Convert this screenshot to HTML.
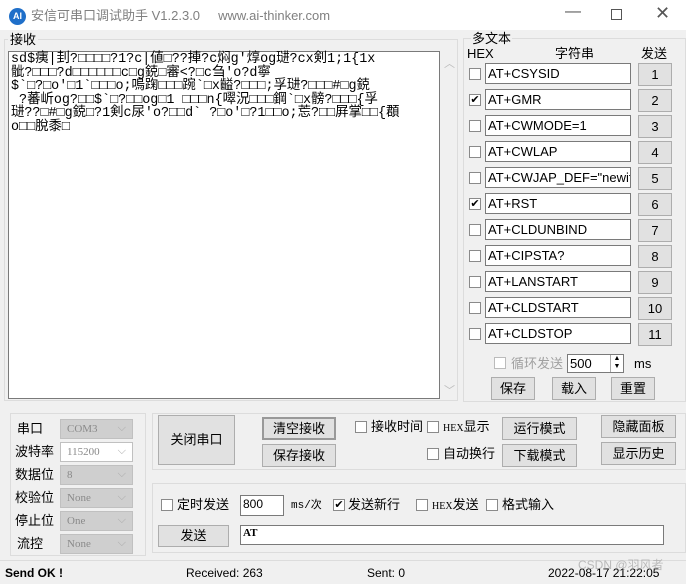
<!DOCTYPE html>
<html><head><meta charset="utf-8">
<style>
*{box-sizing:border-box;margin:0;padding:0}
body{width:686px;height:584px;overflow:hidden;background:#f0f0f0;position:relative;font-family:"Liberation Sans","Noto Sans CJK SC",sans-serif;font-size:13px;color:#000;line-height:16px}
.a{position:absolute;white-space:nowrap;line-height:16px}
.btn{position:absolute;background:#e1e1e1;border:1px solid #adadad;text-align:center;font-size:13px}
.inp{position:absolute;background:#fff;border:1px solid #7a7a7a;font-size:13px;padding-left:2px;white-space:nowrap;overflow:hidden}
.cb{position:absolute;width:12px;height:12px;border:1px solid #8a8a8a;background:#fff;font-size:11px;line-height:10px;text-align:center}
.cmb{position:absolute;left:60px;width:73px;height:20px;background:#cfcfcf;border:1px solid #c0c0c0;color:#8a8a8a;font-family:"Liberation Serif","Noto Serif CJK SC",serif;font-size:11px;line-height:18px;padding-left:6px}
.cmb:after{content:"⌵";position:absolute;right:6px;top:-1px;color:#aaa}
.grp{position:absolute;border:1px solid #dcdcdc}
.mono{font-family:"Liberation Mono","WenQuanYi Zen Hei",monospace}
</style></head><body>
<div class="a" style="left:0;top:0;width:686px;height:30px;background:#fff"></div>
<div class="a" style="left:9px;top:8px;width:17px;height:17px;border-radius:50%;background:#1f6fc9;color:#fff;font-size:9px;line-height:17px;text-align:center;font-weight:bold">AI</div>
<div class="a" style="left:31px;top:8px;color:#808080;font-size:13px">安信可串口调试助手 V1.2.3.0&nbsp;&nbsp;&nbsp;&nbsp; www.ai-thinker.com</div>
<div class="a" style="left:565px;top:4px;color:#555;font-size:16px">—</div>
<div class="a" style="left:611px;top:9px;width:11px;height:11px;border:1px solid #555"></div>
<div class="a" style="left:655px;top:5px;color:#555;font-size:18px">✕</div>

<div class="grp" style="left:4px;top:39px;width:454px;height:362px;border-color:#dcdcdc"></div>
<div class="a" style="left:8px;top:32px;background:#f0f0f0;padding:0 2px">接收</div>
<div class="a" style="left:8px;top:51px;width:432px;height:348px;background:#fff;border:1px solid #7a7a7a"></div>
<div class="a mono" style="left:11px;top:53px;font-size:13.4px;line-height:13.5px;white-space:pre">sd$痍|刲?□□□□?1?c|値□??捙?c焖g'焞og琎?cx剣1;1{1x
骴?□□□?d□□□□□□c□g鋴□審&lt;?□c刍'o?d寧
$`□?□o'□1`□□□o;嗚踘□□□踠`□x齸?□□□;孚琎?□□□#□g鋴
 ?蕃岓og?□□$`□?□□og□1 □□□n{噿況□□□鋼`□x髈?□□□{孚
琎??□#□g鋴□?1剣c尿'o?□□d` ?□o'□?1□□o;莣?□□屛掌□□{頵
o□□脫黍□</div>
<div class="a" style="left:444px;top:56px;color:#bbb;font-size:11px">︿</div>
<div class="a" style="left:444px;top:383px;color:#bbb;font-size:11px">﹀</div>

<div class="grp" style="left:463px;top:38px;width:223px;height:364px"></div>
<div class="a" style="left:471px;top:31px;background:#f0f0f0;padding:0 1px">多文本</div>
<div class="a" style="left:467px;top:46px">HEX</div>
<div class="a" style="left:555px;top:46px">字符串</div>
<div class="a" style="left:641px;top:46px">发送</div>

<div class="cb" style="left:469px;top:68px"></div><div class="inp" style="left:485px;top:63px;width:146px;height:21px;line-height:19px">AT+CSYSID</div><div class="btn" style="left:638px;top:63px;width:34px;height:23px;line-height:21px">1</div>
<div class="cb" style="left:469px;top:94px">✔</div><div class="inp" style="left:485px;top:89px;width:146px;height:21px;line-height:19px">AT+GMR</div><div class="btn" style="left:638px;top:89px;width:34px;height:23px;line-height:21px">2</div>
<div class="cb" style="left:469px;top:120px"></div><div class="inp" style="left:485px;top:115px;width:146px;height:21px;line-height:19px">AT+CWMODE=1</div><div class="btn" style="left:638px;top:115px;width:34px;height:23px;line-height:21px">3</div>
<div class="cb" style="left:469px;top:146px"></div><div class="inp" style="left:485px;top:141px;width:146px;height:21px;line-height:19px">AT+CWLAP</div><div class="btn" style="left:638px;top:141px;width:34px;height:23px;line-height:21px">4</div>
<div class="cb" style="left:469px;top:172px"></div><div class="inp" style="left:485px;top:167px;width:146px;height:21px;line-height:19px">AT+CWJAP_DEF="newifi_</div><div class="btn" style="left:638px;top:167px;width:34px;height:23px;line-height:21px">5</div>
<div class="cb" style="left:469px;top:198px">✔</div><div class="inp" style="left:485px;top:193px;width:146px;height:21px;line-height:19px">AT+RST</div><div class="btn" style="left:638px;top:193px;width:34px;height:23px;line-height:21px">6</div>
<div class="cb" style="left:469px;top:224px"></div><div class="inp" style="left:485px;top:219px;width:146px;height:21px;line-height:19px">AT+CLDUNBIND</div><div class="btn" style="left:638px;top:219px;width:34px;height:23px;line-height:21px">7</div>
<div class="cb" style="left:469px;top:250px"></div><div class="inp" style="left:485px;top:245px;width:146px;height:21px;line-height:19px">AT+CIPSTA?</div><div class="btn" style="left:638px;top:245px;width:34px;height:23px;line-height:21px">8</div>
<div class="cb" style="left:469px;top:276px"></div><div class="inp" style="left:485px;top:271px;width:146px;height:21px;line-height:19px">AT+LANSTART</div><div class="btn" style="left:638px;top:271px;width:34px;height:23px;line-height:21px">9</div>
<div class="cb" style="left:469px;top:302px"></div><div class="inp" style="left:485px;top:297px;width:146px;height:21px;line-height:19px">AT+CLDSTART</div><div class="btn" style="left:638px;top:297px;width:34px;height:23px;line-height:21px">10</div>
<div class="cb" style="left:469px;top:328px"></div><div class="inp" style="left:485px;top:323px;width:146px;height:21px;line-height:19px">AT+CLDSTOP</div><div class="btn" style="left:638px;top:323px;width:34px;height:23px;line-height:21px">11</div>

<div class="cb" style="left:494px;top:357px;border-color:#bbb"></div>
<div class="a" style="left:511px;top:356px;color:#a0a0a0">循环发送</div>
<div class="inp" style="left:567px;top:354px;width:57px;height:19px;line-height:17px">500</div>
<div class="a" style="left:610px;top:355px;width:13px;height:17px;border-left:1px solid #aaa;font-size:7px;line-height:8px;text-align:center">▲<br>▼</div>
<div class="a" style="left:634px;top:356px">ms</div>
<div class="btn" style="left:491px;top:377px;width:44px;height:23px;line-height:21px">保存</div>
<div class="btn" style="left:552px;top:377px;width:44px;height:23px;line-height:21px">载入</div>
<div class="btn" style="left:611px;top:377px;width:44px;height:23px;line-height:21px">重置</div>

<div class="grp" style="left:10px;top:413px;width:136px;height:143px"></div>
<div class="a" style="left:17px;top:421px">串口</div><div class="cmb" style="top:419px">COM3</div>
<div class="a" style="left:15px;top:444px">波特率</div><div class="cmb" style="top:442px;background:#fff;color:#888">115200</div>
<div class="a" style="left:15px;top:467px">数据位</div><div class="cmb" style="top:465px">8</div>
<div class="a" style="left:15px;top:490px">校验位</div><div class="cmb" style="top:488px">None</div>
<div class="a" style="left:15px;top:513px">停止位</div><div class="cmb" style="top:511px">One</div>
<div class="a" style="left:17px;top:536px">流控</div><div class="cmb" style="top:534px">None</div>

<div class="grp" style="left:152px;top:413px;width:534px;height:57px"></div>
<div class="btn" style="left:158px;top:415px;width:77px;height:50px;line-height:48px">关闭串口</div>
<div class="btn" style="left:262px;top:417px;width:74px;height:23px;line-height:19px;border:2px solid #999">清空接收</div>
<div class="btn" style="left:262px;top:444px;width:74px;height:23px;line-height:21px">保存接收</div>
<div class="cb" style="left:355px;top:421px"></div><div class="a" style="left:371px;top:419px">接收时间</div>
<div class="cb" style="left:427px;top:421px"></div><div class="a" style="left:443px;top:419px"><span style="font-size:10px;font-family:'Liberation Serif',serif">HEX</span>显示</div>
<div class="cb" style="left:427px;top:448px"></div><div class="a" style="left:443px;top:446px">自动换行</div>
<div class="btn" style="left:502px;top:417px;width:75px;height:23px;line-height:21px">运行模式</div>
<div class="btn" style="left:502px;top:444px;width:75px;height:23px;line-height:21px">下载模式</div>
<div class="btn" style="left:601px;top:415px;width:75px;height:23px;line-height:21px">隐藏面板</div>
<div class="btn" style="left:601px;top:442px;width:75px;height:23px;line-height:21px">显示历史</div>

<div class="grp" style="left:152px;top:483px;width:534px;height:70px"></div>
<div class="cb" style="left:161px;top:499px"></div><div class="a" style="left:177px;top:497px">定时发送</div>
<div class="inp" style="left:240px;top:495px;width:44px;height:21px;line-height:17px;font-size:12px">800</div>
<div class="a mono" style="left:291px;top:498px;font-size:11px">ms/次</div>
<div class="cb" style="left:333px;top:499px">✔</div><div class="a" style="left:348px;top:497px">发送新行</div>
<div class="cb" style="left:416px;top:499px"></div><div class="a" style="left:432px;top:497px"><span style="font-size:10px;font-family:'Liberation Serif',serif">HEX</span>发送</div>
<div class="cb" style="left:486px;top:499px"></div><div class="a" style="left:502px;top:497px">格式输入</div>
<div class="btn" style="left:158px;top:525px;width:71px;height:22px;line-height:20px">发送</div>
<div class="inp" style="left:240px;top:525px;width:424px;height:20px;line-height:15px;font-size:11px;font-family:'Liberation Serif',serif;font-weight:bold">AT</div>

<div class="a" style="left:0;top:560px;width:686px;height:24px;border-top:1px solid #dcdcdc"></div>
<div class="a" style="left:5px;top:565px;font-weight:bold;font-size:12px">Send OK !</div>
<div class="a" style="left:186px;top:565px;font-size:12px">Received: 263</div>
<div class="a" style="left:367px;top:565px;font-size:12px">Sent: 0</div>
<div class="a" style="left:548px;top:565px;font-size:12px">2022-08-17 21:22:05</div>
<div class="a" style="left:578px;top:557px;font-size:12px;color:rgba(150,150,150,0.6)">CSDN @羽风者</div>
</body></html>
